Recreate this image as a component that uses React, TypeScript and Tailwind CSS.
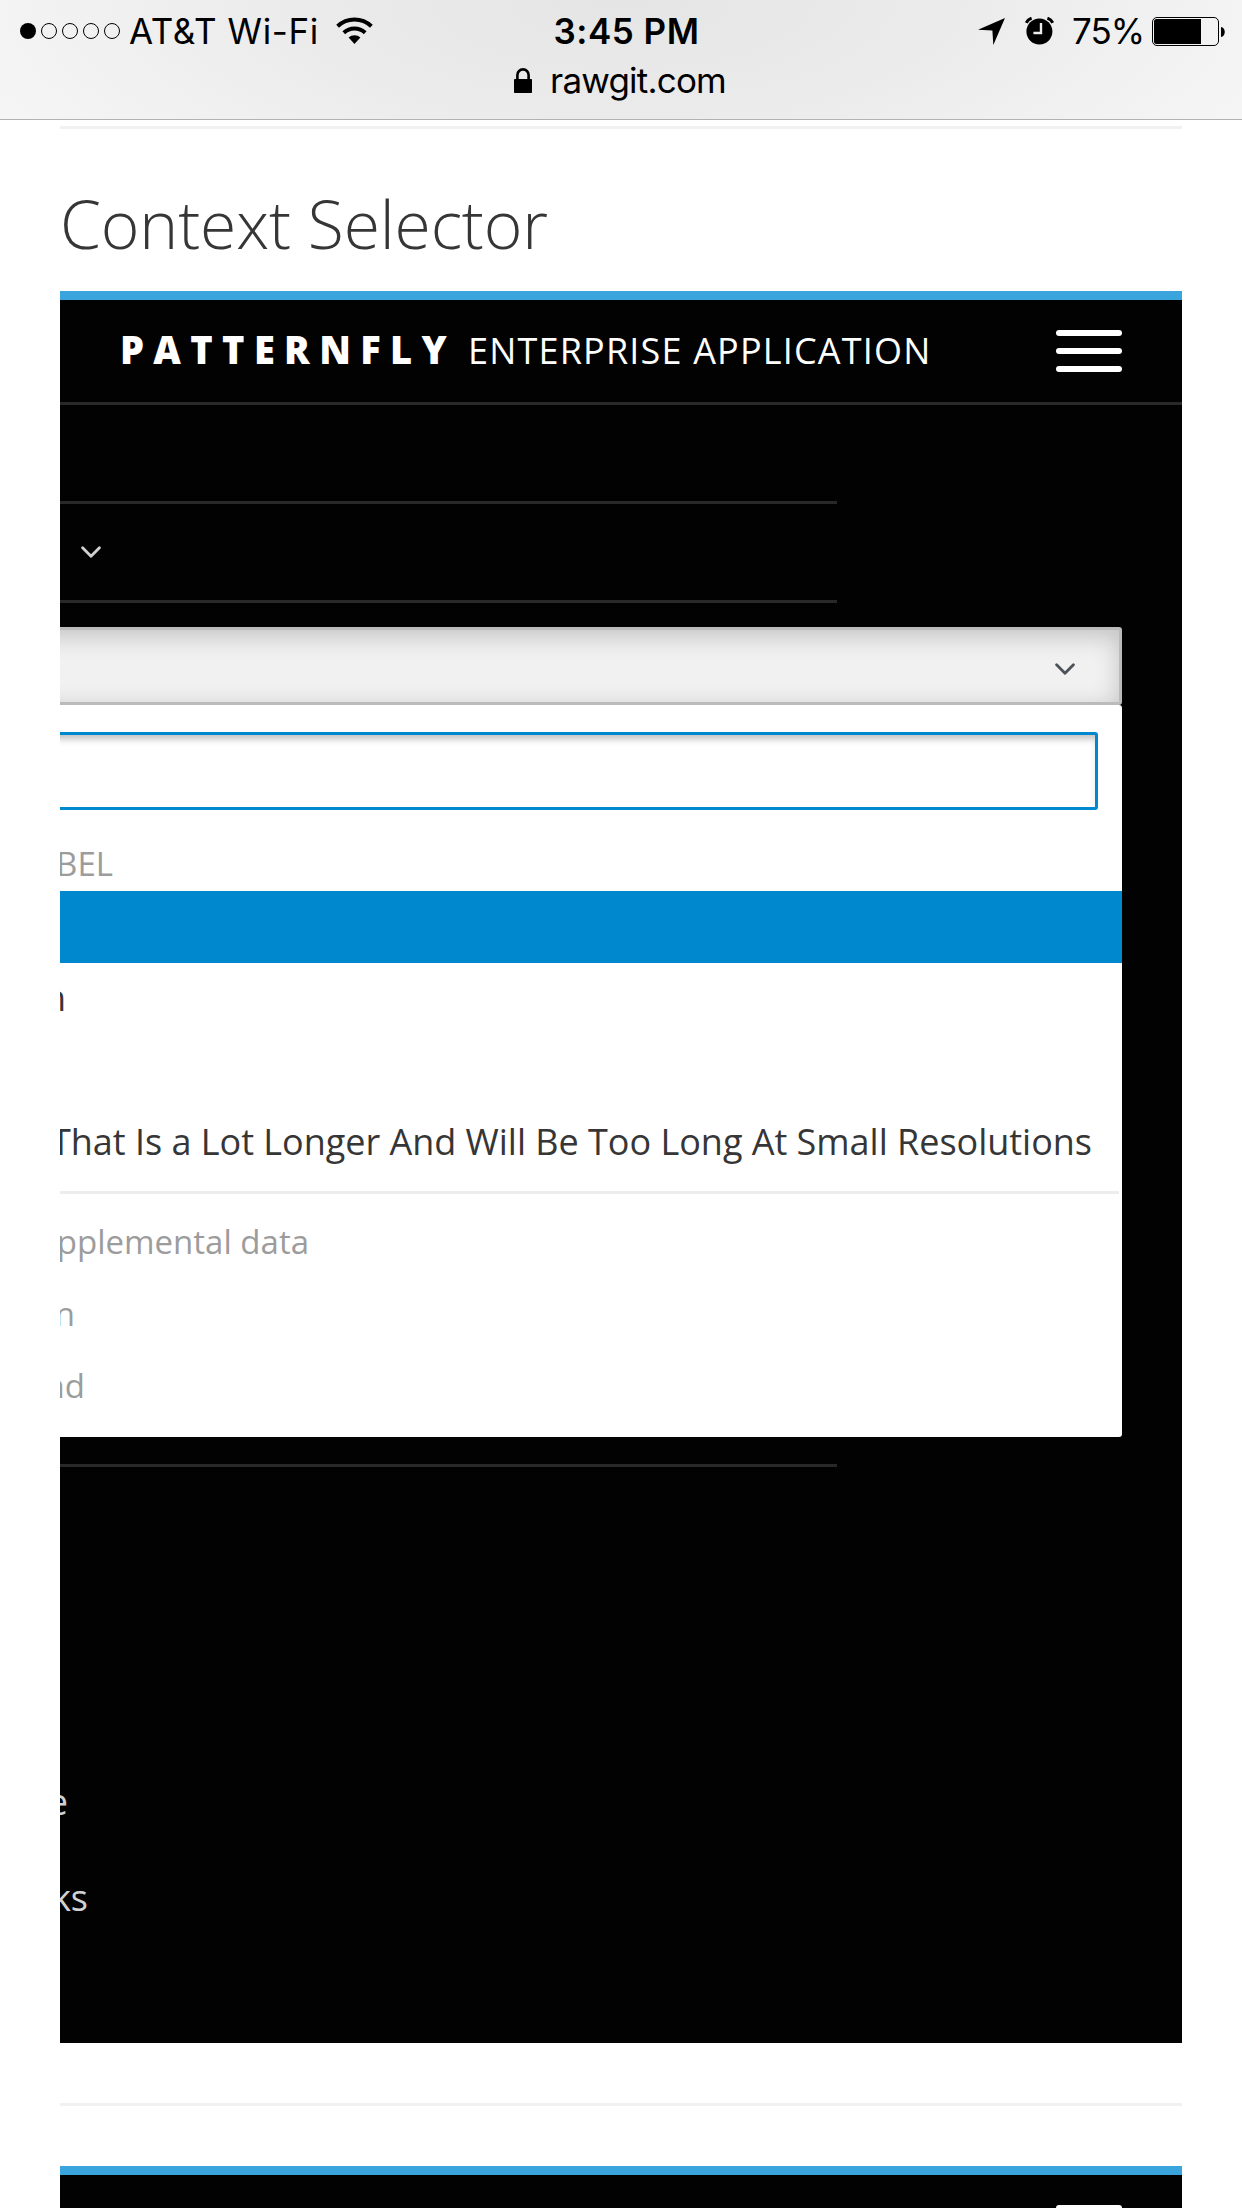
import React from "react";

function Wifi() {
  return (
    <svg width="37" height="28" viewBox="0 0 37 28" fill="none" stroke="#000" strokeWidth="4">
      <path d="M1.6 9.2a24.5 24.5 0 0 1 33.8 0" />
      <path d="M7.8 15.7a15.6 15.6 0 0 1 21.4 0" />
      <path d="M12.6 20.6a8.6 8.6 0 0 1 11.8 0L18.5 27z" fill="#000" stroke="none" />
    </svg>
  );
}

function Lock() {
  return (
    <svg width="18" height="25" viewBox="0 0 18 25">
      <path d="M3.4 13V7a5.6 5.6 0 0 1 11.2 0v6" fill="none" stroke="#000" strokeWidth="2.6" />
      <rect y="11" width="18" height="14" rx="0.8" />
    </svg>
  );
}

function LocationArrow() {
  return (
    <svg width="27" height="27" viewBox="0 0 27 27">
      <path d="M27 0 L15.3 27 L14.4 12.4 L0 11.8z" />
    </svg>
  );
}

function Alarm() {
  return (
    <svg width="29" height="28" viewBox="0 0 29 28">
      <circle cx="14.4" cy="14.5" r="13" />
      <path d="M1.3 5.8A8 8 0 0 1 6.6 1.2M27.7 5.8A8 8 0 0 0 22.4 1.2" fill="none" stroke="#000" strokeWidth="3" />
      <path d="M16 6v10H8.4" fill="none" stroke="#ececec" strokeWidth="2.4" />
    </svg>
  );
}

function Battery() {
  return (
    <svg width="74" height="29" viewBox="0 0 74 29">
      <rect x="0.5" y="0.5" width="66" height="28" rx="4.5" fill="none" stroke="#000" />
      <path d="M4.5 2H49v25H4.500A2.500 2.500 0 0 1 2 24.500V4.500A2.500 2.500 0 0 1 4.500 2z" />
      <path d="M69 10c5 0.500 5 9.500 0 10z" />
    </svg>
  );
}

function Chevron({ color }: { color: string }) {
  return (
    <svg width="20" height="13" viewBox="0 0 20 13" fill="none" stroke={color} strokeWidth="2.8" strokeLinecap="round" strokeLinejoin="round">
      <path d="M1.600 1.700 L10 10.200 L18.400 1.700" />
    </svg>
  );
}

function StatusBar() {
  return (
    <header className="h-[120px] shrink-0 border-b border-[#b2b2b2] bg-[#f6f6f6] bg-[radial-gradient(ellipse_720px_260px_at_50%_0px,#e5e5e5_0%,#ebebeb_45%,#f6f6f6_100%)] font-['Inter',sans-serif] text-black">
      <div className="grid h-[62px] grid-cols-[500px_242px_500px] text-[35px] leading-[62px]">
        <div className="flex items-center pl-5">
          <div className="flex gap-[5px]">
            <span className="size-4 rounded-full bg-black" />
            <span className="size-4 rounded-full border border-black" />
            <span className="size-4 rounded-full border border-black" />
            <span className="size-4 rounded-full border border-black" />
            <span className="size-4 rounded-full border border-black" />
          </div>
          <span className="ml-[9px] w-[207px] whitespace-nowrap tracking-[0.6px]">AT&amp;T Wi-Fi</span>
          <Wifi />
        </div>
        <div className="whitespace-nowrap pl-[11px] text-center font-semibold tracking-[0.5px]">3:45 PM</div>
        <div className="flex items-center justify-end pr-[16px]">
          <LocationArrow />
          <span className="ml-[20px]"><Alarm /></span>
          <span className="ml-[18px] w-[80px] whitespace-nowrap tracking-[-1px]">75%</span>
          <Battery />
        </div>
      </div>
      <div className="flex h-9 items-center pl-[514px] text-[35px] leading-9">
        <Lock />
        <span className="ml-[18px] whitespace-nowrap tracking-[-0.8px]">rawgit.com</span>
      </div>
    </header>
  );
}

function Hamburger() {
  return (
    <div className="flex w-[66px] flex-col gap-3">
      <span className="h-1.5 rounded-[3px] bg-white" />
      <span className="h-1.5 rounded-[3px] bg-white" />
      <span className="h-1.5 rounded-[3px] bg-white" />
    </div>
  );
}

/** Text whose start is hidden behind the left edge of the panel. */
function Clipped({ children, className }: { children: string; className: string }) {
  return (
    <div className={`flex justify-end overflow-hidden whitespace-nowrap leading-[70px] ${className}`}>
      <span>{children}</span>
    </div>
  );
}

function ContextMenu() {
  return (
    <div className="w-[1062px]">
      <div className="-ml-10 flex h-[78px] items-center justify-end rounded-[3px] border-[3px] border-[#bbb] bg-[#f1f1f1] pr-[44px] pt-[6px] shadow-[inset_0_6px_24px_rgba(0,0,0,0.2)]">
        <Chevron color="#4d5258" />
      </div>
      <div className="h-[732px] rounded-r-[3px] bg-white pt-[27px]">
        <div className="-ml-10 h-[78px] w-[1078px] rounded-[3px] border-[3px] border-[#0088ce] shadow-[inset_0_7px_7px_-3px_rgba(0,0,0,0.25)]" />
        <Clipped className="mt-[19px] h-[62px] w-[53px] text-[33px] text-[#9c9c9c]">BEL</Clipped>
        <div className="h-[72px] bg-[#0088ce]" />
        <Clipped className="h-[72px] w-[6px] text-[36px] text-[#363636]">n</Clipped>
        <div className="h-[72px]" />
        <Clipped className="h-[72px] w-[1032px] text-[36px] tracking-[-0.025px] text-[#363636]">
          That Is a Lot Longer And Will Be Too Long At Small Resolutions
        </Clipped>
        <div className="mt-[12px] h-[3px] w-[1059px] bg-[#ededed]" />
        <Clipped className="mt-[13px] h-[72px] w-[249px] text-[33px] text-[#9c9c9c]">pplemental data</Clipped>
        <Clipped className="h-[72px] w-[15px] text-[33px] text-[#9c9c9c]">n</Clipped>
        <Clipped className="h-[72px] w-[25px] text-[33px] text-[#9c9c9c]">nd</Clipped>
      </div>
    </div>
  );
}

export default function App() {
  return (
    <div className="flex h-[2208px] w-[1242px] flex-col overflow-hidden bg-white font-['Open_Sans',sans-serif]">
      <StatusBar />
      <main className="flex w-[1122px] grow flex-col self-center pt-[6px]">
        <div className="h-[3px] bg-[#f1f1f1]" />
        <h1 className="mb-8 mt-[58px] h-[72px] whitespace-nowrap text-[66px] font-light leading-[72px] tracking-[-0.15px] text-[#363636]">
          Context Selector
        </h1>

        <section className="flex h-[1752px] shrink-0 flex-col overflow-hidden border-t-[9px] border-[#39a5dc] bg-[#020202]">
          <nav className="flex h-[105px] shrink-0 items-center justify-between border-b-[3px] border-[#292929] pl-[60px] pr-[60px] text-white">
            <div className="flex items-baseline whitespace-nowrap pb-[3px]">
              <span className="w-[348px] text-[38px] font-extrabold tracking-[9.350px]">PATTERNFLY</span>
              <span className="text-[36px] tracking-[1.180px]">ENTERPRISE APPLICATION</span>
            </div>
            <Hamburger />
          </nav>
          <div className="mt-[96px] flex h-[102px] w-[777px] shrink-0 items-center border-y-[3px] border-[#292929] pl-[21px]">
            <Chevron color="#d1d1d1" />
          </div>
          <div className="mt-6 shrink-0">
            <ContextMenu />
          </div>
          <div className="mt-[27px] h-[3px] w-[777px] shrink-0 bg-[#292929]" />
          <Clipped className="mt-[300px] h-[68px] w-[8px] shrink-0 text-[36px] text-[#d1d1d1]">e</Clipped>
          <Clipped className="mt-[28px] h-[68px] w-[28px] shrink-0 text-[36px] text-[#d1d1d1]">ks</Clipped>
        </section>

        <div className="mt-[60px] h-[3px] shrink-0 bg-[#f1f1f1]" />

        <section className="mt-[60px] h-[42px] shrink-0 overflow-hidden border-t-[9px] border-[#39a5dc] bg-[#020202]">
          <div className="flex justify-end pr-[60px] pt-[30px]">
            <Hamburger />
          </div>
        </section>
      </main>
    </div>
  );
}
